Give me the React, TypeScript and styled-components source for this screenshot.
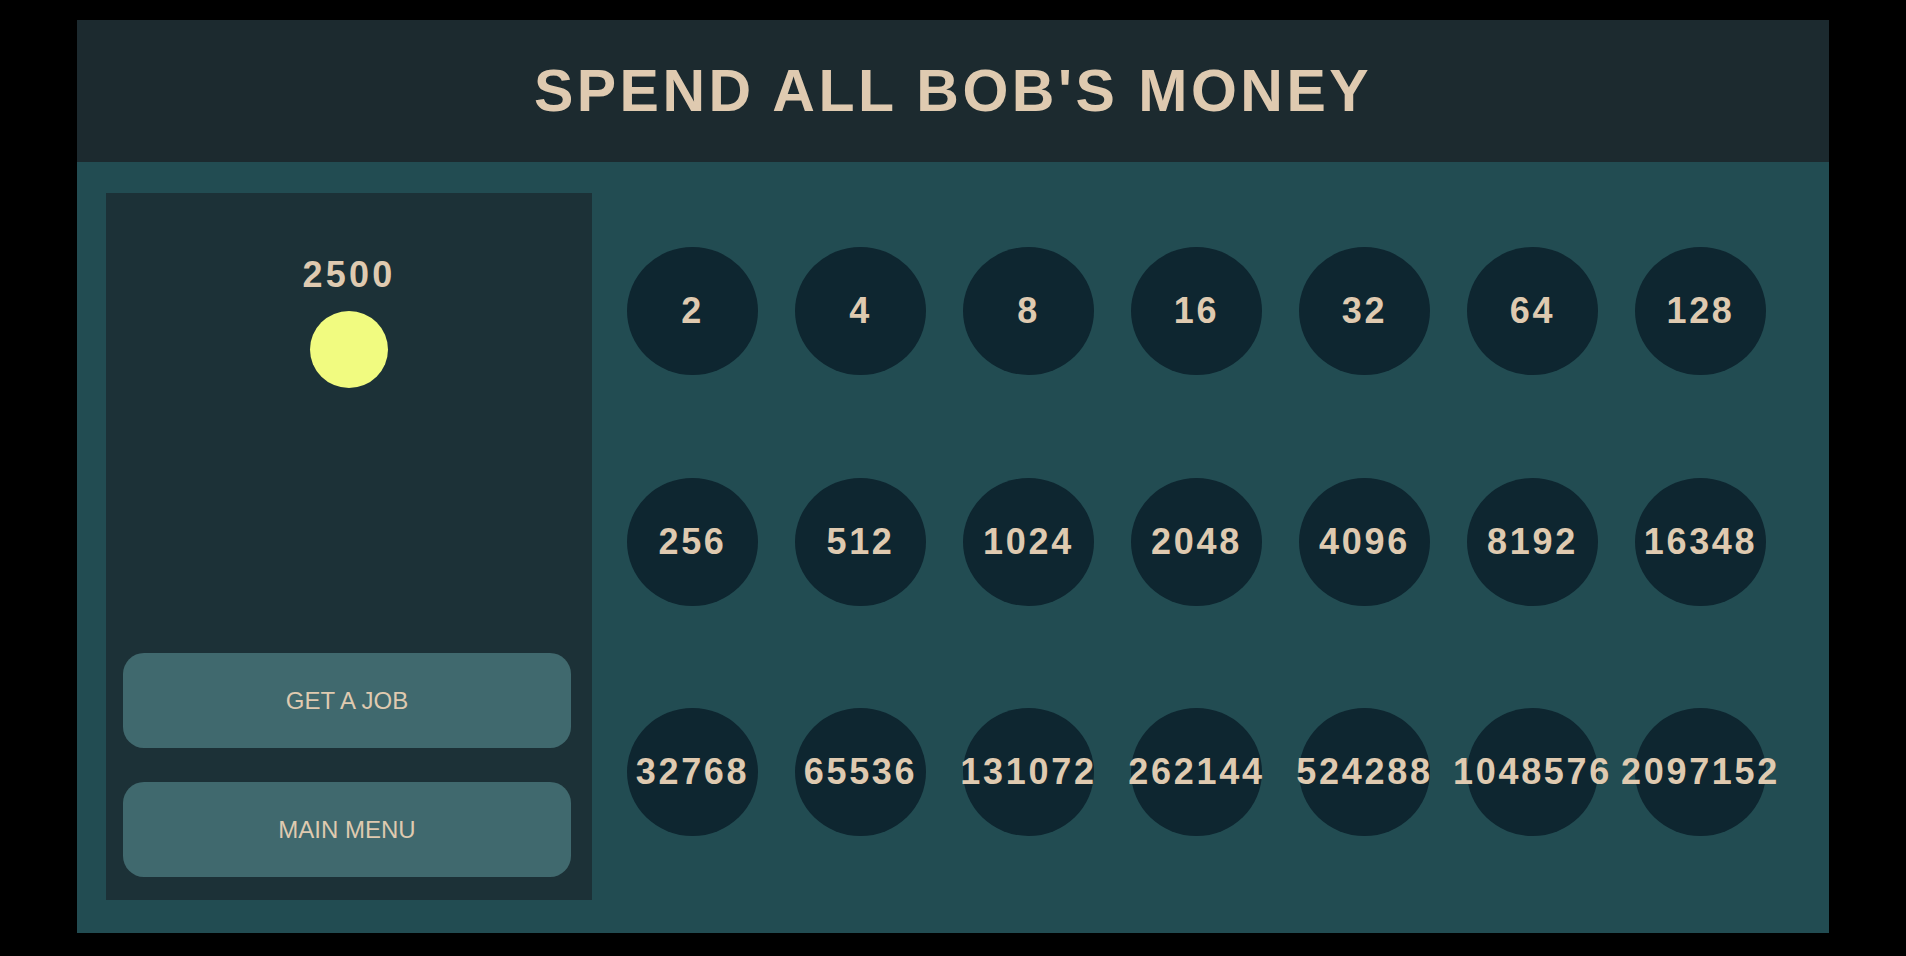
import React from "react";
import styled, { createGlobalStyle } from "styled-components";

const GlobalStyle = createGlobalStyle`
  html, body {
    margin: 0;
    padding: 0;
    background: #000000;
  }
  body {
    font-family: "Liberation Sans", Arial, sans-serif;
  }
  * { box-sizing: border-box; }
`;

const Frame = styled.div`
  width: 1752px;
  height: 913px;
  margin: 20px auto 0;
  display: flex;
  flex-direction: column;
  background: #224c52;
`;

const Header = styled.header`
  height: 142px;
  flex: 0 0 142px;
  background: #1c2a2f;
  display: flex;
  align-items: center;
  justify-content: center;
`;

const Title = styled.h1`
  margin: 0;
  font-family: "Liberation Sans", Arial, sans-serif;
  font-weight: 700;
  font-size: 59px;
  letter-spacing: 3.5px;
  color: #dfcab0;
  line-height: 1;
`;

const Main = styled.main`
  flex: 1;
  display: flex;
  align-items: flex-start;
  padding: 31px 0 0 29px;
`;

const Sidebar = styled.aside`
  width: 486px;
  height: 707px;
  background: #1c3137;
  display: flex;
  flex-direction: column;
  align-items: center;
  padding: 61px 17px 23px;
`;

const Balance = styled.div`
  font-size: 36px;
  font-weight: 700;
  letter-spacing: 3.2px;
  color: #dfcab0;
  line-height: normal;
`;

const Coin = styled.div`
  width: 78px;
  height: 77px;
  margin-top: 15px;
  border-radius: 50%;
  background: #f1fb80;
`;

const Buttons = styled.div`
  margin-top: auto;
  align-self: flex-start;
  width: 448px;
  display: flex;
  flex-direction: column;
  gap: 34px;
`;

const ActionButton = styled.button`
  width: 100%;
  height: 95px;
  border: none;
  border-radius: 21px;
  background: #40696e;
  color: #dfcab0;
  font-family: "Liberation Sans", Arial, sans-serif;
  font-size: 24px;
  font-weight: 400;
  text-transform: uppercase;
  cursor: pointer;
`;

const Board = styled.section`
  padding: 54px 0 0 35px;
  display: grid;
  grid-template-columns: repeat(7, 131px);
  grid-auto-rows: 128px;
  column-gap: 37px;
  row-gap: 102.5px;
`;

const Bubble = styled.button`
  width: 131px;
  height: 128px;
  border: none;
  padding: 0;
  border-radius: 50%;
  background: #0e2630;
  color: #dfcab0;
  display: flex;
  align-items: center;
  justify-content: center;
  white-space: nowrap;
  overflow: visible;
  font-family: "Liberation Sans", Arial, sans-serif;
  font-size: 36px;
  font-weight: 700;
  letter-spacing: 2.7px;
  cursor: pointer;
`;

const values = [
  2, 4, 8, 16, 32, 64, 128,
  256, 512, 1024, 2048, 4096, 8192, 16348,
  32768, 65536, 131072, 262144, 524288, 1048576, 2097152,
];

export default function App() {
  return (
    <>
      <GlobalStyle />
      <Frame>
        <Header>
          <Title>SPEND ALL BOB'S MONEY</Title>
        </Header>
        <Main>
          <Sidebar>
            <Balance>2500</Balance>
            <Coin />
            <Buttons>
              <ActionButton>Get a job</ActionButton>
              <ActionButton>Main menu</ActionButton>
            </Buttons>
          </Sidebar>
          <Board>
            {values.map((v) => (
              <Bubble key={v}>{v}</Bubble>
            ))}
          </Board>
        </Main>
      </Frame>
    </>
  );
}
